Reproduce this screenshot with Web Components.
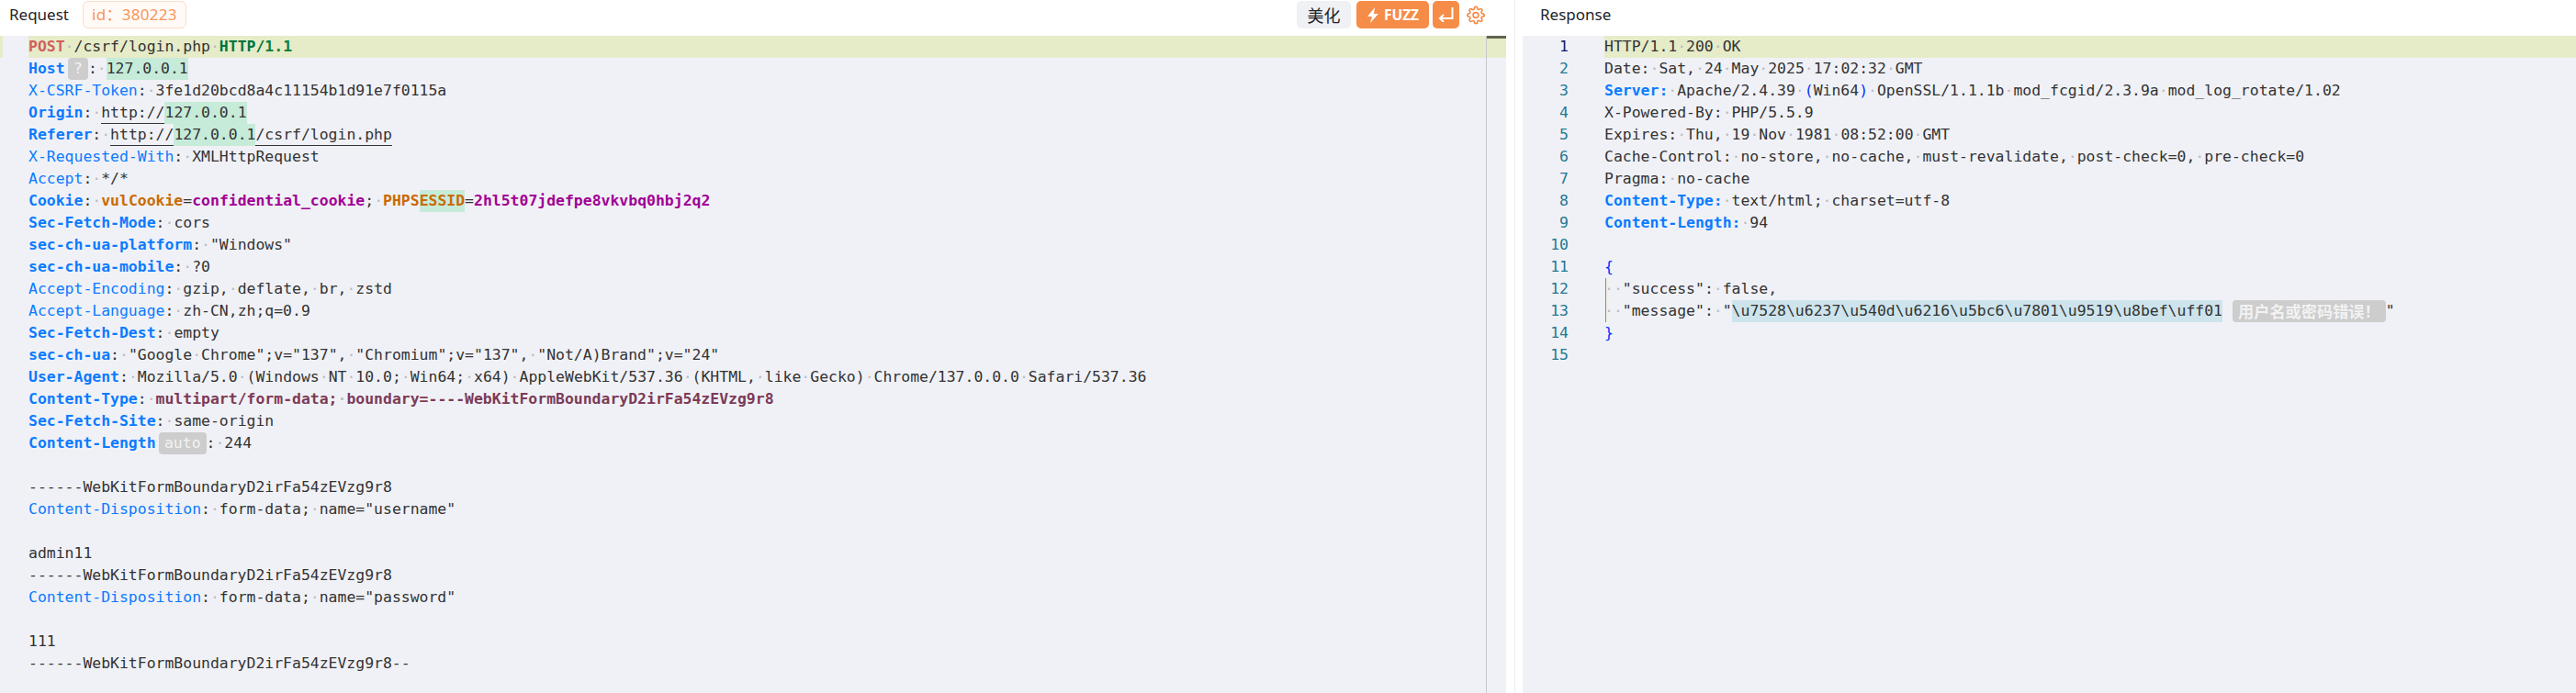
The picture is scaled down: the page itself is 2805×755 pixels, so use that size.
<!DOCTYPE html>
<html>
<head>
<meta charset="utf-8">
<title>Request / Response</title>
<style>
  html, body { margin: 0; height: 100%; background: #fff; }
</style>
</head>
<body>
<http-workbench>
  <editor-pane slot="request" label="Request" ruler>
    <id-badge slot="head">id：380223</id-badge>
    <pane-tools slot="tools"></pane-tools>
    <code-view id="req"></code-view>
  </editor-pane>
  <editor-pane slot="response" label="Response">
    <code-view id="res" numbered></code-view>
  </editor-pane>
</http-workbench>

<script>
function html(str) {
  const template = document.createElement("template");
  template.innerHTML = str;
  return template;
}

const workbenchTemplate = html(`
  <style>
    :host { display: flex; height: 100vh; overflow: hidden; }
    .left { flex: 0 0 1640px; display: flex; min-width: 0; }
    .split { flex: 0 0 18px; display: flex; justify-content: center; }
    .split i { width: 1px; background: #ececf0; }
    .right { flex: 1; display: flex; min-width: 0; }
    ::slotted(*) { flex: 1; min-width: 0; }
  </style>
  <div class="left"><slot name="request"></slot></div>
  <div class="split"><i></i></div>
  <div class="right"><slot name="response"></slot></div>
`);

class HttpWorkbench extends HTMLElement {
  constructor() {
    super();
    this.attachShadow({ mode: "open" }).appendChild(workbenchTemplate.content.cloneNode(true));
  }
}

const paneTemplate = html(`
  <style>
    :host { display: flex; flex-direction: column; position: relative; overflow: hidden; }
    header {
      flex: 0 0 39px;
      display: flex;
      align-items: flex-start;
      background: #fff;
      font: 17px/31px "Noto Sans", "Noto Sans CJK SC", sans-serif;
      color: #1f2329;
    }
    .label { padding-left: 10px; margin-right: 15px; height: 31px; }
    :host([label="Response"]) .label { padding-left: 19px; }
    .tools { margin-left: auto; }
    main { flex: 1; background: #f0f1f6; min-height: 0; }
    .ruler {
      display: none;
      position: absolute;
      top: 39px;
      right: 0;
      bottom: 0;
      width: 21px;
      border-left: 1px solid #c8c8cc;
    }
    .ruler::before { content: ""; display: block; height: 3px; background: #60644f; }
    :host([ruler]) .ruler { display: block; }
  </style>
  <header>
    <div class="label"></div>
    <slot name="head"></slot>
    <div class="tools"><slot name="tools"></slot></div>
  </header>
  <main><slot></slot></main>
  <div class="ruler"></div>
`);

class EditorPane extends HTMLElement {
  constructor() {
    super();
    this.attachShadow({ mode: "open" }).appendChild(paneTemplate.content.cloneNode(true));
    this.shadowRoot.querySelector(".label").textContent = this.getAttribute("label");
  }
}

const badgeTemplate = html(`
  <style>
    :host {
      display: block;
      box-sizing: border-box;
      width: 113px;
      height: 30px;
      margin-top: 1px;
      padding-left: 9px;
      border: 1px solid #fbdcc8;
      border-radius: 6px;
      background: #fffaf6;
      color: #f8955a;
      font: 17px/28px "Noto Sans", "Noto Sans CJK SC", sans-serif;
      letter-spacing: .3px;
      white-space: nowrap;
    }
  </style>
  <slot></slot>
`);

class IdBadge extends HTMLElement {
  constructor() {
    super();
    this.attachShadow({ mode: "open" }).appendChild(badgeTemplate.content.cloneNode(true));
  }
}

const toolsTemplate = html(`
  <style>
    :host { display: flex; align-items: center; padding: 1px 23px 0 0; height: 30px; }
    button {
      height: 30px;
      border: 0;
      padding: 0;
      border-radius: 5px;
      display: flex;
      align-items: center;
      justify-content: center;
      font-family: "Noto Sans CJK SC", sans-serif;
    }
    .plain { width: 59px; background: #eff1f5; color: #1f2329; font-size: 18px; margin-right: 6px; }
    .fuzz {
      width: 79px;
      gap: 5px;
      background: #f58d48;
      color: #fff;
      font: bold 15.5px "Noto Sans", sans-serif;
      margin-right: 4px;
    }
    .enter { width: 29px; background: #f58d48; margin-right: 8px; }
  </style>
  <button class="plain">美化</button>
  <button class="fuzz">
    <svg width="14" height="17" viewBox="0 0 14 17"><path d="M9 0 1 10h5l-2 7 9-10H8z" fill="#fff"/></svg>
    FUZZ
  </button>
  <button class="enter">
    <svg width="17" height="16" viewBox="0 0 17 16" fill="none" stroke="#fff" stroke-width="2">
      <path d="M15.5 0v12H2"/><path d="M6 8l-4 4 4 4"/>
    </svg>
  </button>
  <svg width="20" height="21" viewBox="0 0 24 24" fill="none" stroke="#f58d48" stroke-width="2" stroke-linecap="round" stroke-linejoin="round">
    <circle cx="12" cy="12" r="3.5"/>
    <path d="M19.4 15a1.65 1.65 0 0 0 .33 1.82l.06.06a2 2 0 0 1 0 2.83 2 2 0 0 1-2.83 0l-.06-.06a1.65 1.65 0 0 0-1.82-.33 1.65 1.65 0 0 0-1 1.51V21a2 2 0 0 1-2 2 2 2 0 0 1-2-2v-.09A1.65 1.65 0 0 0 9 19.4a1.65 1.65 0 0 0-1.82.33l-.06.06a2 2 0 0 1-2.83 0 2 2 0 0 1 0-2.83l.06-.06a1.65 1.65 0 0 0 .33-1.82 1.65 1.65 0 0 0-1.51-1H3a2 2 0 0 1-2-2 2 2 0 0 1 2-2h.09A1.65 1.65 0 0 0 4.6 9a1.65 1.65 0 0 0-.33-1.82l-.06-.06a2 2 0 0 1 0-2.83 2 2 0 0 1 2.83 0l.06.06a1.65 1.65 0 0 0 1.82.33H9a1.65 1.65 0 0 0 1-1.51V3a2 2 0 0 1 2-2 2 2 0 0 1 2 2v.09a1.65 1.65 0 0 0 1 1.51 1.65 1.65 0 0 0 1.82-.33l.06-.06a2 2 0 0 1 2.83 0 2 2 0 0 1 0 2.83l-.06.06a1.65 1.65 0 0 0-.33 1.82V9a1.65 1.65 0 0 0 1.51 1H21a2 2 0 0 1 2 2 2 2 0 0 1-2 2h-.09a1.65 1.65 0 0 0-1.51 1z"/>
  </svg>
`);

class PaneTools extends HTMLElement {
  constructor() {
    super();
    this.attachShadow({ mode: "open" }).appendChild(toolsTemplate.content.cloneNode(true));
  }
}

const codeLineTemplate = html(`
  <style>
    :host {
      display: flex;
      height: 24px;
      font: 16.44px/24px "DejaVu Sans Mono", monospace;
      color: #333;
      white-space: pre;
    }
    .num { flex: 0 0 50px; text-align: right; color: #237893; }
    .num:empty { display: none; }
    :host([active]) .num { color: #0b216f; }
    .mark { flex: 0 0 31px; }
    :host([numbered]) .mark { flex: 0 0 39px; }
    :host([active]:not([numbered])) .mark { box-shadow: inset 3px 0 #e6ebc8; }
    .text { flex: 1; position: relative; }
    :host([active]) .text { background: #e6ebc8; }
    :host([guide]) .text::before {
      content: "";
      position: absolute;
      left: 1px;
      top: 0;
      bottom: 0;
      border-left: 1px solid #b8860b;
    }
    i { font-style: normal; color: #b9bcc2; }
    .hk { color: #0b7bff; font-weight: bold; }
    .k { color: #0b7bff; }
    .post { color: #d0605e; font-weight: bold; }
    .ver { color: #00733b; font-weight: bold; }
    .num1 { color: #09803f; font-weight: bold; }
    .ck { color: #c96a00; font-weight: bold; }
    .cv { color: #a00095; font-weight: bold; }
    .mt { color: #7d3a56; font-weight: bold; }
    .br { color: #0431fa; }
    .g { background: #c6ebd9; display: inline-block; }
    .u { display: inline-block; height: 23px; border-bottom: 1px solid #333; }
    .hl { background: #cde4ec; display: inline-block; }
    .w {
      display: inline-block;
      height: 24px;
      margin-left: 3.4px;
      padding: 0 6px;
      border-radius: 4px;
      background: #cdcdcd;
      color: #f2f2f2;
    }
    .zh {
      margin-left: 11px;
      font: bold 17.2px/24px "Noto Sans CJK SC", sans-serif;
      vertical-align: top;
    }
  </style>
  <div class="num"></div>
  <div class="mark"></div>
  <div class="text"></div>
`);

class CodeLine extends HTMLElement {
  constructor() {
    super();
    this.attachShadow({ mode: "open" }).appendChild(codeLineTemplate.content.cloneNode(true));
  }

  /**
   * Takes a line in a small markup: {class|text} is a span, spaces turn into dots.
   * @param {string} src
   * @param {number | null} n
   */
  render(src, n) {
    const root = this.shadowRoot;
    if (n) root.querySelector(".num").textContent = n;
    const dots = (s) => s.replace(/ /g, "<i>·</i>");
    let out = src;
    for (let i = 0; i < 2; i++) {
      out = out.replace(/\{([\w ]+)\|([^{}]*)\}/g, (_, c, t) => `<span class="${c}">${t}</span>`);
    }
    root.querySelector(".text").innerHTML = out.replace(/(<[^>]*>)|( +)/g, (m, tag, sp) => tag ? tag : dots(sp));
  }
}

class CodeView extends HTMLElement {
  constructor() {
    super();
    this.attachShadow({ mode: "open" }).innerHTML = `
      <style>:host { display: block; }</style>
      <slot></slot>
    `;
  }

  set lines(list) {
    const numbered = this.hasAttribute("numbered");
    list.forEach((src, i) => {
      const line = document.createElement("code-line");
      if (i === 0) line.setAttribute("active", "");
      if (numbered) line.setAttribute("numbered", "");
      if (numbered && (i === 11 || i === 12)) line.setAttribute("guide", "");
      this.appendChild(line);
      line.render(src, numbered ? i + 1 : null);
    });
  }
}

customElements.define("http-workbench", HttpWorkbench);
customElements.define("editor-pane", EditorPane);
customElements.define("id-badge", IdBadge);
customElements.define("pane-tools", PaneTools);
customElements.define("code-line", CodeLine);
customElements.define("code-view", CodeView);

document.getElementById("req").lines = [
  '{post|POST} /csrf/login.php {ver|HTTP/}{num1|1.1}',
  '{hk|Host}{w|?}: {g|127.0.0.1}',
  '{k|X-CSRF-Token}: 3fe1d20bcd8a4c11154b1d91e7f0115a',
  '{hk|Origin}: {u|http://{g|127.0.0.1}}',
  '{hk|Referer}: {u|http://{g|127.0.0.1}/csrf/login.php}',
  '{k|X-Requested-With}: XMLHttpRequest',
  '{k|Accept}: */*',
  '{hk|Cookie}: {ck|vulCookie}={cv|confidential_cookie}; {ck|PHPS}{g|<span class="ck">ESSID</span>}={cv|2hl5t07jdefpe8vkvbq0hbj2q2}',
  '{hk|Sec-Fetch-Mode}: cors',
  '{hk|sec-ch-ua-platform}: "Windows"',
  '{hk|sec-ch-ua-mobile}: ?0',
  '{k|Accept-Encoding}: gzip, deflate, br, zstd',
  '{k|Accept-Language}: zh-CN,zh;q=0.9',
  '{hk|Sec-Fetch-Dest}: empty',
  '{hk|sec-ch-ua}: "Google Chrome";v="137", "Chromium";v="137", "Not/A)Brand";v="24"',
  '{hk|User-Agent}: Mozilla/5.0 (Windows NT 10.0; Win64; x64) AppleWebKit/537.36 (KHTML, like Gecko) Chrome/137.0.0.0 Safari/537.36',
  '{hk|Content-Type}: {mt|multipart/form-data; boundary=----WebKitFormBoundaryD2irFa54zEVzg9r8}',
  '{hk|Sec-Fetch-Site}: same-origin',
  '{hk|Content-Length}{w|auto}: 244',
  '',
  '------WebKitFormBoundaryD2irFa54zEVzg9r8',
  '{k|Content-Disposition}: form-data; name="username"',
  '',
  'admin11',
  '------WebKitFormBoundaryD2irFa54zEVzg9r8',
  '{k|Content-Disposition}: form-data; name="password"',
  '',
  '111',
  '------WebKitFormBoundaryD2irFa54zEVzg9r8--'
];

document.getElementById("res").lines = [
  'HTTP/1.1 200 OK',
  'Date: Sat, 24 May 2025 17:02:32 GMT',
  '{hk|Server:} Apache/2.4.39 {br|(}Win64{br|)} OpenSSL/1.1.1b mod_fcgid/2.3.9a mod_log_rotate/1.02',
  'X-Powered-By: PHP/5.5.9',
  'Expires: Thu, 19 Nov 1981 08:52:00 GMT',
  'Cache-Control: no-store, no-cache, must-revalidate, post-check=0, pre-check=0',
  'Pragma: no-cache',
  '{hk|Content-Type:} text/html; charset=utf-8',
  '{hk|Content-Length:} 94',
  '',
  '<span class="br">{</span>',
  '  "success": false,',
  '  "message": "{hl|\\u7528\\u6237\\u540d\\u6216\\u5bc6\\u7801\\u9519\\u8bef\\uff01}{w zh|用户名或密码错误！}"',
  '<span class="br">}</span>',
  ''
];
</script>
</body>
</html>
